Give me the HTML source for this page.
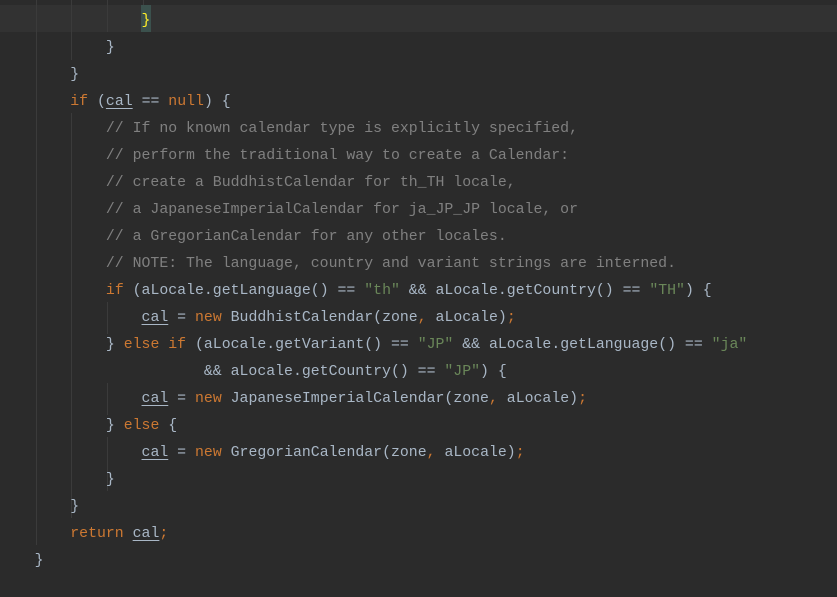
<!DOCTYPE html>
<html><head><meta charset="utf-8"><style>
html,body{margin:0;padding:0;background:#2b2b2b;width:837px;height:597px;overflow:hidden}
.ed{position:relative;width:837px;height:597px;font-family:"Liberation Mono",monospace;font-size:14.85px;color:#a9b7c6}
.cur{position:absolute;left:0;top:5px;width:837px;height:27px;background:#323232}
.g{position:absolute;width:1px;background:#3b3b3b}
.l{position:absolute;left:-1px;height:27px;line-height:27px;white-space:pre;margin-top:3px}
.k{color:#cc7832}.c{color:#808080}.s{color:#6a8759}
.u{text-decoration:underline;text-underline-offset:3px}
</style></head><body><div class="ed">
<div class="cur"></div>
<div style="position:absolute;left:141px;top:5px;width:10px;height:27px;background:#3b514d"></div>
<div class="g" style="left:36px;top:0;height:545px"></div>
<div class="g" style="left:71px;top:0;height:60px"></div>
<div class="g" style="left:71px;top:113px;height:405px"></div>
<div class="g" style="left:107px;top:0;height:32px"></div>
<div class="g" style="left:107px;top:302px;height:32px"></div>
<div class="g" style="left:107px;top:383px;height:32px"></div>
<div class="g" style="left:107px;top:437px;height:54px"></div>
<div class="g" style="left:143px;top:0;height:5px"></div>
<div class="l" style="top:-22px">                <span class="k">;</span></div>
<div class="l" style="top:5px">                <span style="color:#ffef28">}</span></div>
<div class="l" style="top:32px">            }</div>
<div class="l" style="top:59px">        }</div>
<div class="l" style="top:86px">        <span class="k">if</span> (<span class="u">cal</span> == <span class="k">null</span>) {</div>
<div class="l c" style="top:113px">            // If no known calendar type is explicitly specified,</div>
<div class="l c" style="top:140px">            // perform the traditional way to create a Calendar:</div>
<div class="l c" style="top:167px">            // create a BuddhistCalendar for th_TH locale,</div>
<div class="l c" style="top:194px">            // a JapaneseImperialCalendar for ja_JP_JP locale, or</div>
<div class="l c" style="top:221px">            // a GregorianCalendar for any other locales.</div>
<div class="l c" style="top:248px">            // NOTE: The language, country and variant strings are interned.</div>
<div class="l" style="top:275px">            <span class="k">if</span> (aLocale.getLanguage() == <span class="s">"th"</span> &amp;&amp; aLocale.getCountry() == <span class="s">"TH"</span>) {</div>
<div class="l" style="top:302px">                <span class="u">cal</span> = <span class="k">new</span> BuddhistCalendar(zone<span class="k">,</span> aLocale)<span class="k">;</span></div>
<div class="l" style="top:329px">            } <span class="k">else if</span> (aLocale.getVariant() == <span class="s">"JP"</span> &amp;&amp; aLocale.getLanguage() == <span class="s">"ja"</span></div>
<div class="l" style="top:356px">                       &amp;&amp; aLocale.getCountry() == <span class="s">"JP"</span>) {</div>
<div class="l" style="top:383px">                <span class="u">cal</span> = <span class="k">new</span> JapaneseImperialCalendar(zone<span class="k">,</span> aLocale)<span class="k">;</span></div>
<div class="l" style="top:410px">            } <span class="k">else</span> {</div>
<div class="l" style="top:437px">                <span class="u">cal</span> = <span class="k">new</span> GregorianCalendar(zone<span class="k">,</span> aLocale)<span class="k">;</span></div>
<div class="l" style="top:464px">            }</div>
<div class="l" style="top:491px">        }</div>
<div class="l" style="top:518px">        <span class="k">return</span> <span class="u">cal</span><span class="k">;</span></div>
<div class="l" style="top:545px">    }</div>
</div></body></html>
